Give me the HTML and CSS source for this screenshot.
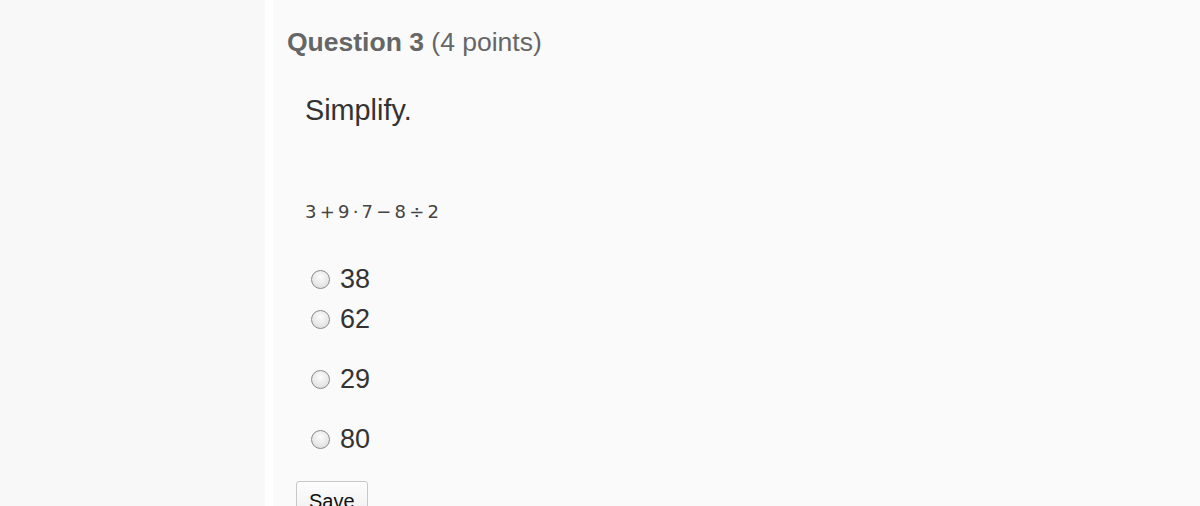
FILE: index.html
```html
<!DOCTYPE html>
<html>
<head>
<meta charset="utf-8">
<link rel="stylesheet" href="styles.css">
</head>
<body>
<div class="page">
  <aside class="side"></aside>
  <main class="main">
    <h2 class="qtitle"><b>Question 3</b> (4 points)</h2>
    <p class="prompt">Simplify.</p>
    <p class="expr">3 + 9 · 7 − 8 ÷ 2</p>
    <div class="choices">
      <label class="choice c1"><span class="radio"></span><span>38</span></label>
      <label class="choice c2"><span class="radio"></span><span>62</span></label>
      <label class="choice c3"><span class="radio"></span><span>29</span></label>
      <label class="choice c4"><span class="radio"></span><span>80</span></label>
    </div>
    <button class="save">Save</button>
  </main>
</div>
</body>
</html>
```
FILE: styles.css
```css
html, body { margin: 0; padding: 0; background: #ffffff; }
body { font-family: "Liberation Sans", Arial, sans-serif; overflow: hidden; height: 506px; }
.page { display: flex; height: 506px; gap: 8px; }
.side { width: 265px; background: #f8f8f8; flex: none; }
.main { flex: 1; background: #fafafa; padding: 26px 0 0 14px; }
.qtitle { margin: 0; font-size: 26.5px; font-weight: normal; color: #666; line-height: 32px; }
.qtitle b { font-weight: bold; }
.prompt { margin: 35px 0 0 18px; font-size: 28.8px; color: #333; line-height: 34px; }
.expr { margin: 75px 0 0 18px; font-family: "DejaVu Sans", sans-serif; font-size: 18px; color: #444; line-height: 20px; word-spacing: -2.5px; }
.choices { margin: 42px 0 0 24px; display: flex; flex-direction: column; }
.choice { display: flex; align-items: center; gap: 10px; font-size: 27px; color: #333; height: 30px; }
.c2 { margin-top: 10px; }
.c3 { margin-top: 30px; }
.c4 { margin-top: 30px; }
.radio { width: 17px; height: 17px; border-radius: 50%; border: 1px solid #8a8a8a; background: radial-gradient(circle at 50% 35%, #fdfdfd, #d8d8d8); box-sizing: content-box; }
.save { margin: 27px 0 0 9px; font-family: "Liberation Sans", Arial, sans-serif; font-size: 20px; color: #111; background: linear-gradient(#fdfdfd, #eeeeee); border: 1px solid #c8c8c8; border-radius: 3px; padding: 8px 12px; line-height: 22px; }
```
